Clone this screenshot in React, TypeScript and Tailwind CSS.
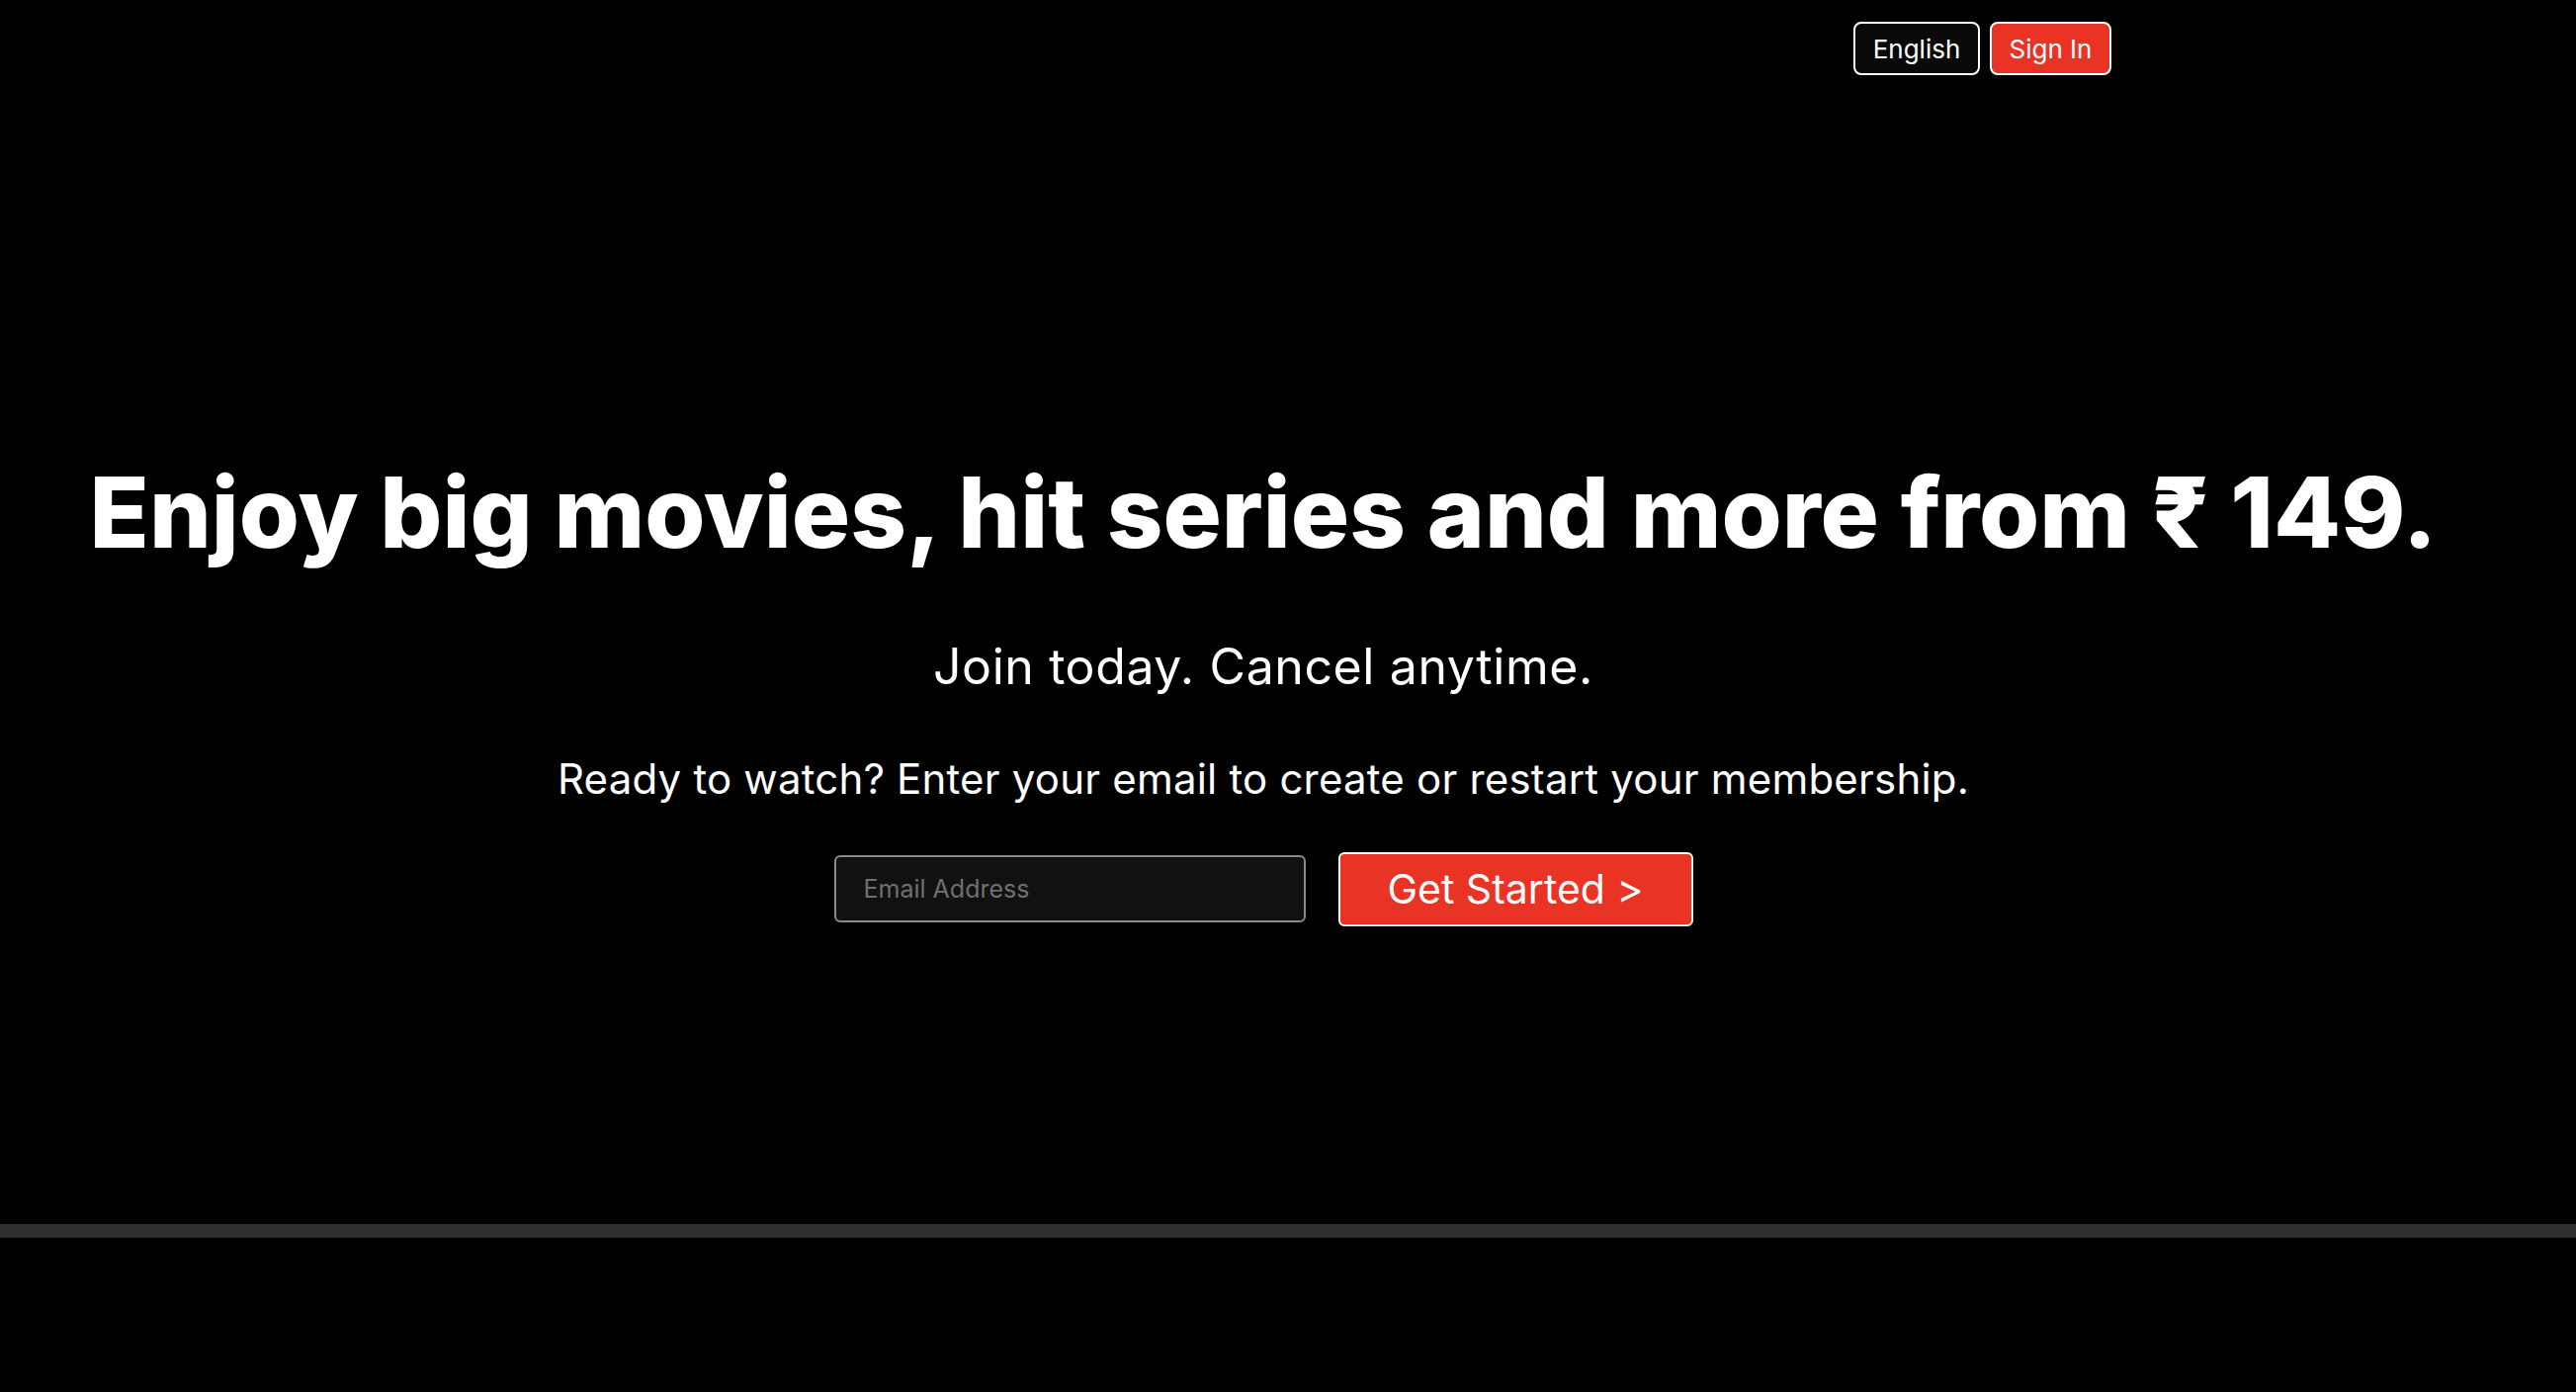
import React from 'react';

const font = { fontFamily: 'Inter, "Open Sans", sans-serif' };

export default function App() {
  const [email, setEmail] = React.useState('');

  return (
    <div className="min-h-screen bg-black text-white" style={font}>
      <section className="h-[1252px] flex flex-col border-b-[14px] border-[#2f2f2f]">
        {/* Top bar */}
        <nav className="flex justify-end gap-[10px] pt-[22px] pr-[470px]">
          <button className="h-[54px] w-[128px] rounded-lg border-2 border-white bg-[#0a0a0a] text-[26px] text-white">
            English
          </button>
          <button className="h-[54px] w-[123px] rounded-lg border-2 border-white bg-[#e93325] text-[26px] text-white">
            Sign In
          </button>
        </nav>

        {/* Hero */}
        <div className="flex flex-col items-center pr-[50px] pt-[383px]">
          <h1 className="text-[99px] font-extrabold leading-[1.2]">
            Enjoy big movies, hit series and more from ₹ 149.
          </h1>
          <p className="mt-[71px] text-[50px] leading-none tracking-[0.6px]">Join today. Cancel anytime.</p>
          <p className="mt-[68px] text-[42px] leading-none tracking-[0.2px]">
            Ready to watch? Enter your email to create or restart your membership.
          </p>
          <form className="mt-[53px] flex items-center gap-[33px]" onSubmit={(e) => e.preventDefault()}>
            <input
              type="email"
              value={email}
              onChange={(e) => setEmail(e.target.value)}
              placeholder="Email Address"
              className="h-[68px] w-[477px] rounded-md border-2 border-[#8a8a8a] bg-[#111111] px-[28px] text-[25px] text-white placeholder:text-[#6f6f6f] focus:outline-none"
            />
            <button
              type="submit"
              className="h-[75px] w-[359px] rounded-md border-2 border-white bg-[#e93325] text-[41px] text-white"
            >
              Get Started &gt;
            </button>
          </form>
        </div>
      </section>
    </div>
  );
}
